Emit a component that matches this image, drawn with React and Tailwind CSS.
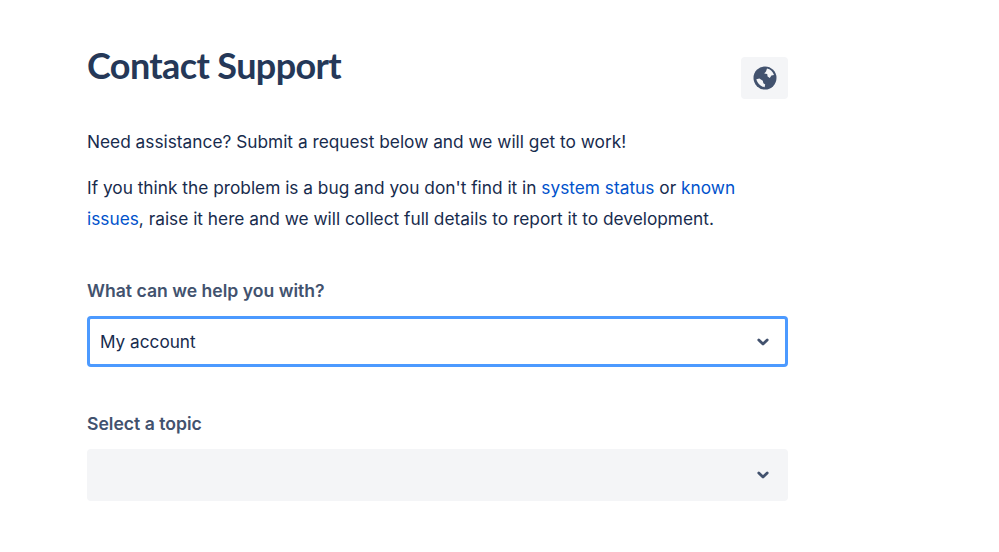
function Chevron() {
    return (
        <svg className="w-6 h-6 text-[#42526e]" viewBox="0 0 24 24" fill="none" stroke="currentColor" strokeWidth={2.8} strokeLinecap="round" strokeLinejoin="round">
            <path d="M7.8 10 12 14l4.2-4" />
        </svg>
    );
}

function Globe() {
    return (
        <svg className="w-6 h-6" viewBox="0 0 24 24">
            <circle cx="12" cy="12" r="11.5" fill="#42526e" />
            <path fill="#f4f5f7" d="M14 2.6c3.4.7 6 3.2 7 6.4l-2.6.4-1.6 2.6-2.2-1.4-.4-2.6-3-.6L13 5.4zM3.4 13.2l3-.8 3.4 2.4.6 2.4 1.8 1.4-.6 2.6c-3.9-.7-7.2-4-8.2-7.8z" />
        </svg>
    );
}

function Field({ label, children, className }) {
    return (
        <div className={className}>
            <label className="block text-[17.6px] leading-[24px] font-semibold text-[#42526e]">{label}</label>
            {children}
        </div>
    );
}

export default function App() {
    return (
        <div className="w-[999px] h-[552px] overflow-hidden bg-white pl-[87px] font-['Inter',sans-serif] text-[#172b4d]">
            <div className="w-[701px]">
                <div className="flex justify-between items-start pt-[43px]">
                    <h1 className="text-[36px] leading-[44px] font-bold tracking-[-0.62px] text-[#253858] font-['Lato',sans-serif]">Contact Support</h1>
                    <button className="w-[47px] h-[42px] mt-[14px] rounded bg-[#f4f5f7] flex items-center justify-center">
                        <Globe />
                    </button>
                </div>

                <p className="mt-[27px] text-[17.3px] leading-[31px]">Need assistance? Submit a request below and we will get to work!</p>
                <p className="mt-[15px] text-[17.3px] leading-[31px]">
                    If you think the problem is a bug and you don't find it in <a className="text-[#0052cc]">system status</a> or <a className="text-[#0052cc]">known issues</a>, raise it here and we will collect full details to report it to development.
                </p>

                <Field label="What can we help you with?" className="mt-[45px]">
                    <div className="mt-[13px] h-[51px] rounded border-[3px] border-[#4c9aff] bg-white flex items-center justify-between pl-[10px] pr-[10px]">
                        <span className="text-[17.2px]">My account</span>
                        <Chevron />
                    </div>
                </Field>

                <Field label="Select a topic" className="mt-[45px]">
                    <div className="mt-[13px] h-[52px] rounded bg-[#f4f5f7] flex items-center justify-end pr-[13px]">
                        <Chevron />
                    </div>
                </Field>
            </div>
        </div>
    );
}
